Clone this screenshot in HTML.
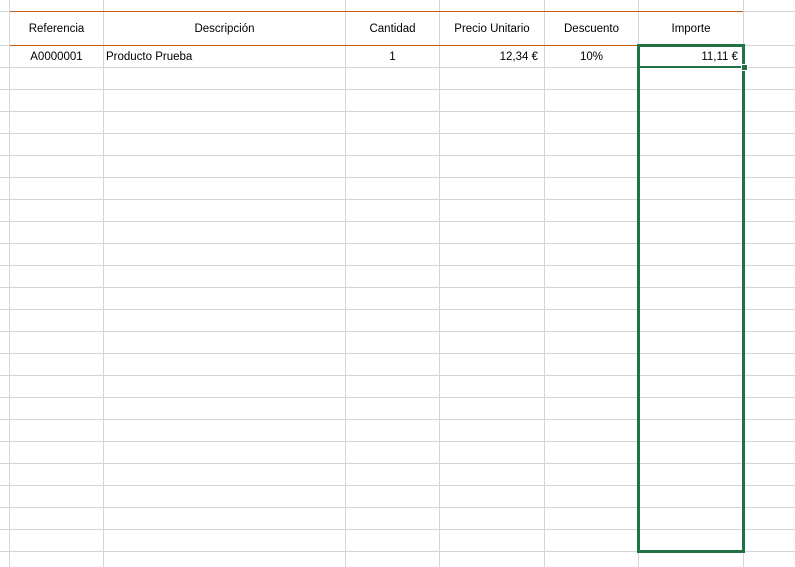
<!DOCTYPE html><html><head><style>
body{margin:0;width:795px;height:567px;overflow:hidden;background:#fff;font-family:"Liberation Sans",sans-serif;font-size:11.5px;color:#000;position:relative}
.h{position:absolute;left:0;width:795px;height:1px;background:#d4d4d4}
.v{position:absolute;top:0;height:567px;width:1px;background:#d4d4d4}
.o{position:absolute;left:10px;width:733px;height:1px;background:#c55a11}
.t{position:absolute;white-space:nowrap}
.c{text-align:center}
</style></head><body>
<div style="position:absolute;left:0;top:45px;width:795px;height:522px;background:repeating-linear-gradient(to bottom,#d4d4d4 0,#d4d4d4 1px,transparent 1px,transparent 22px)"></div>
<div class="h" style="top:11px"></div>
<div class="v" style="left:9px"></div><div class="v" style="left:103px"></div><div class="v" style="left:345px"></div><div class="v" style="left:439px"></div><div class="v" style="left:544px"></div><div class="v" style="left:638px"></div><div class="v" style="left:743px"></div>
<div class="o" style="top:11px"></div><div class="o" style="top:45px"></div>
<div class="t c" style="left:10px;width:93px;top:23px">Referencia</div>
<div class="t c" style="left:104px;width:241px;top:23px">Descripción</div>
<div class="t c" style="left:346px;width:93px;top:23px">Cantidad</div>
<div class="t c" style="left:440px;width:104px;top:23px">Precio Unitario</div>
<div class="t c" style="left:545px;width:93px;top:23px">Descuento</div>
<div class="t c" style="left:639px;width:104px;top:23px">Importe</div>
<div class="t c" style="left:10px;width:93px;top:51px">A0000001</div>
<div class="t" style="left:106px;top:51px">Producto Prueba</div>
<div class="t c" style="left:346px;width:93px;top:51px">1</div>
<div class="t" style="left:440px;width:98px;text-align:right;top:51px">12,34 €</div>
<div class="t c" style="left:545px;width:93px;top:51px">10%</div>
<div class="t" style="left:639px;width:99px;text-align:right;top:51px">11,11 €</div>
<div style="position:absolute;left:637px;top:44px;width:102px;height:503px;border:3px solid #217346"></div>
<div style="position:absolute;left:639px;top:66px;width:103px;height:2px;background:#217346"></div>
<div style="position:absolute;left:741px;top:64px;width:5px;height:5px;background:#217346;border:1px solid #fff"></div>
</body></html>
